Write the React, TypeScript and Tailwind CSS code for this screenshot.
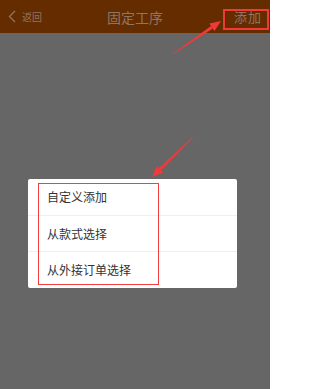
import React from "react";

function Arrow({ x1, y1, x2, y2 }: { x1: number; y1: number; x2: number; y2: number }) {
  const dx = x2 - x1;
  const dy = y2 - y1;
  const len = Math.hypot(dx, dy);
  const ux = dx / len;
  const uy = dy / len;
  const hl = 11;
  const hw = 4.5;
  const bx = x2 - ux * hl;
  const by = y2 - uy * hl;
  const px = -uy;
  const py = ux;
  const pts = `${x2},${y2} ${bx + px * hw},${by + py * hw} ${bx - px * hw},${by - py * hw}`;
  return (
    <g>
      <polygon points={`${x1 - px * 0.4},${y1 - py * 0.4} ${x1 + px * 0.4},${y1 + py * 0.4} ${bx + px * 1.6},${by + py * 1.6} ${bx - px * 1.6},${by - py * 1.6}`} fill="#f03a3a" />
      <polygon points={pts} fill="#f03a3a" />
    </g>
  );
}

export default function App() {
  const font = { fontFamily: '"Noto Sans CJK SC", "Noto Sans", sans-serif' };
  return (
    <div className="relative w-[270px] h-[389px] overflow-hidden bg-[#666666] flex flex-col" style={font}>
      <div className="h-[33px] bg-[#652c00] flex items-center relative shrink-0">
        <div className="flex items-center pl-[8px] gap-[6px]">
          <svg width="8" height="13" viewBox="0 0 8 13">
            <path d="M7 1 L1.5 6.5 L7 12" fill="none" stroke="#8d7565" strokeWidth="1.3" />
          </svg>
          <span className="text-[10px] leading-none text-[#8d7565]">返回</span>
        </div>
        <div className="absolute left-0 right-0 text-center text-[14px] leading-none text-[#8d7565] pointer-events-none">固定工序</div>
        <div className="ml-auto pr-[8px] text-[13px] leading-none text-[#8d7565] tracking-[1px]">添加</div>
      </div>
      <div className="flex-1 relative">
        <div className="ml-[28px] mt-[146px] w-[209px] bg-white rounded-[2px] flex flex-col text-[12px] text-[#333333]">
          <div className="h-[37px] flex items-center pl-[19px] border-b border-[#efefef]">自定义添加</div>
          <div className="h-[36px] flex items-center pl-[19px] border-b border-[#efefef]">从款式选择</div>
          <div className="h-[36px] flex items-center pl-[19px]">从外接订单选择</div>
        </div>
      </div>
      <div className="absolute left-[223px] top-[9px] w-[46px] h-[21px] border-2 border-[#f03a3a]" />
      <div className="absolute left-[38px] top-[183px] w-[121px] h-[102px] border-[1.5px] border-[#f53f3f]" />
      <svg className="absolute left-0 top-0" width="270" height="389" viewBox="0 0 270 389">
        <Arrow x1={173} y1={54} x2={221} y2={21} />
        <Arrow x1={193} y1={137} x2={152} y2={177} />
      </svg>
    </div>
  );
}
